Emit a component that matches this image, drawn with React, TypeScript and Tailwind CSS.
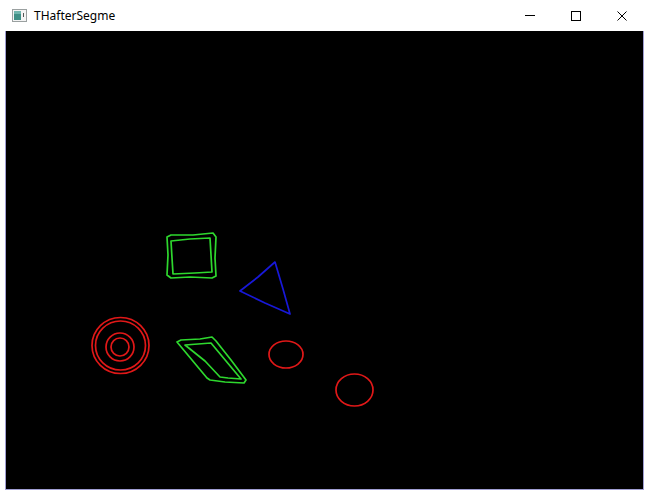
import React from "react";

export default function App() {
  return (
    <div className="w-[649px] h-[493px] bg-white flex flex-col" style={{ fontFamily: '"Segoe UI", "Noto Sans", sans-serif' }}>
      <div className="h-[31px] flex items-center shrink-0">
        <div className="pl-[12px] pr-[7px] flex items-center">
          <svg width="15" height="13" viewBox="0 0 15 13">
            <rect x="0.5" y="0.5" width="14" height="12" fill="#f4f4f4" stroke="#9aa0a0" />
            <rect x="2" y="2" width="7" height="9" fill="#3f8f86" />
            <rect x="2" y="2" width="7" height="3" fill="#6fb5ad" />
            <rect x="11" y="4" width="1" height="4" fill="#555" />
          </svg>
        </div>
        <span className="text-[12px] text-black leading-none" style={{ fontFamily: '"Noto Sans", "Open Sans", sans-serif' }}>THafterSegme</span>
        <div className="ml-auto flex h-full">
          <div className="w-[46px] flex items-center justify-center">
            <div className="w-[10px] h-px bg-black" />
          </div>
          <div className="w-[46px] flex items-center justify-center">
            <div className="w-[10px] h-[10px] border border-black" />
          </div>
          <div className="w-[46px] flex items-center justify-center mr-[4px]">
            <svg width="10" height="10" viewBox="0 0 10 10">
              <path d="M0.5 0.5 L9.5 9.5 M9.5 0.5 L0.5 9.5" stroke="#000" strokeWidth="1" />
            </svg>
          </div>
        </div>
      </div>
      <div className="flex-1 pl-[5px] pr-[5px] pb-[3px] flex">
        <div className="flex-1 bg-black border-l border-r border-b border-[#a09ed2]">
          <svg width="637" height="458" viewBox="6 31 637 458" className="block">
            <g fill="none" strokeWidth="1.7" strokeLinejoin="round">
              {/* green square */}
              <path d="M167,237 L171,235 L193,235 L213,233 L216,237 L215,258 L216,276 L212,278 L190,277 L171,278 L167,275 L168,255 Z" stroke="#2ed82e" />
              <path d="M171,241 L190,239 L210,238 L211,255 L212,272 L195,273 L173,274 L172,258 Z" stroke="#2ed82e" />
              {/* blue triangle */}
              <path d="M275,262 L258,277 L240,291 L265,303 L290,314 L283,289 Z" stroke="#1818d8" />
              {/* concentric circles */}
              <ellipse cx="120.5" cy="345.5" rx="28.5" ry="28" stroke="#e01818" />
              <ellipse cx="120.5" cy="345.5" rx="25" ry="24.5" stroke="#e01818" />
              <ellipse cx="120" cy="347" rx="14" ry="14" stroke="#e01818" />
              <ellipse cx="120" cy="347" rx="9" ry="9" stroke="#e01818" />
              {/* parallelogram */}
              <path d="M177,342 L181,340 L200,339 L212,337 L216,341 L231,360 L246,380 L244,383 L225,382 L210,380 L207,378 L192,360 Z" stroke="#2ed82e" />
              <path d="M185,345 L198,344 L211,343 L226,361 L241,379 L228,378 L220,377 L205,361 Z" stroke="#2ed82e" />
              {/* circles */}
              <ellipse cx="286" cy="354.5" rx="17" ry="13.5" stroke="#e01818" />
              <ellipse cx="354.5" cy="390" rx="18.5" ry="16" stroke="#e01818" />
            </g>
          </svg>
        </div>
      </div>
    </div>
  );
}
